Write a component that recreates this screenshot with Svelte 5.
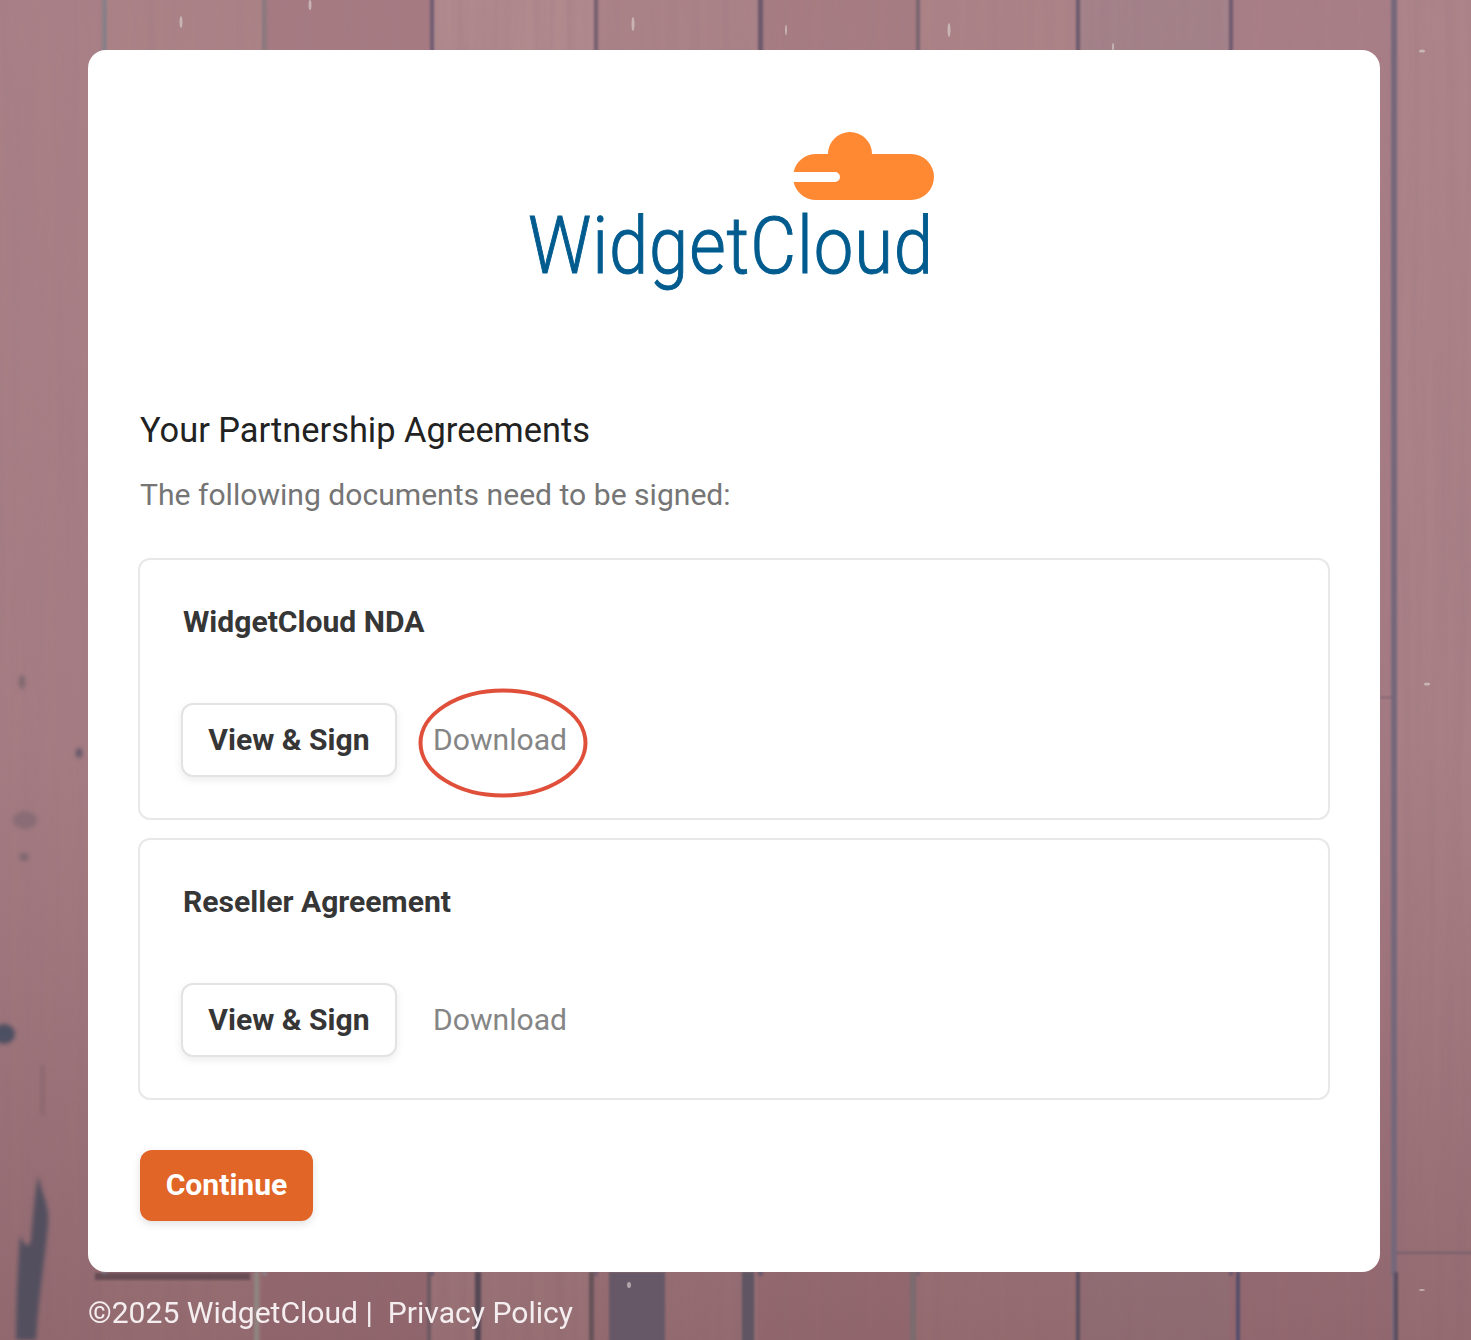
<script lang="ts">
	// plank joints of the deck behind the card, x in page pixels
	const joints = [
		{ x: 102, w: 5, c: '#8a7f88' },
		{ x: 262, w: 5, c: '#8d7a80' },
		{ x: 430, w: 4, c: '#6f5c72' },
		{ x: 594, w: 4, c: '#77606f' },
		{ x: 758, w: 5, c: '#6d5a6c' },
		{ x: 916, w: 4, c: '#7a6470' },
		{ x: 1076, w: 4, c: '#6d5a6c' },
		{ x: 1229, w: 4, c: '#6f5a70' },
		{ x: 1391, w: 6, c: '#76687a' }
	];
	const planks = [
		{ x: 0, w: 102, c: '#a98086' },
		{ x: 102, w: 160, c: '#ab8386' },
		{ x: 262, w: 168, c: '#a67a81' },
		{ x: 430, w: 164, c: '#b08a8d' },
		{ x: 594, w: 164, c: '#aa8388' },
		{ x: 758, w: 158, c: '#a77c82' },
		{ x: 916, w: 160, c: '#ac8386' },
		{ x: 1076, w: 153, c: '#a38289' },
		{ x: 1229, w: 162, c: '#a97e86' },
		{ x: 1391, w: 80, c: '#ac8489' }
	];
	// joints of the lower boards, only visible under the card
	const lowerJoints = [
		{ x: 254, w: 5, c: '#8f8480' },
		{ x: 427, w: 4, c: '#6e5a62' },
		{ x: 475, w: 6, c: '#574a54' },
		{ x: 589, w: 5, c: '#67525a' },
		{ x: 609, w: 56, c: '#665866' },
		{ x: 742, w: 12, c: '#5f5464' },
		{ x: 910, w: 6, c: '#7c6c70' },
		{ x: 1076, w: 4, c: '#5c5060' },
		{ x: 1236, w: 4, c: '#56506a' },
		{ x: 1394, w: 4, c: '#5c5060' }
	];
	const flecks = [
		[181, 22, 1.5, 6], [310, 5, 1.5, 5], [633, 24, 1.5, 7], [786, 30, 1, 5], [949, 30, 1.5, 7],
		[1113, 47, 1, 4], [1422, 51, 3, 1.5], [1427, 684, 3, 1.5], [1422, 1290, 3, 1], [629, 1285, 2, 3]
	];
	const docs = [
		{ title: 'WidgetCloud NDA', marked: true },
		{ title: 'Reseller Agreement', marked: false }
	];
</script>

<div class="page">
	<svg class="deck" width="1471" height="1340" viewBox="0 0 1471 1340" aria-hidden="true">
		<defs>
			<filter id="grain" x="0" y="0" width="100%" height="100%">
				<feTurbulence type="fractalNoise" baseFrequency="0.09 0.003" numOctaves="4" seed="7" />
				<feColorMatrix values="0 0 0 0 0.36  0 0 0 0 0.2  0 0 0 0 0.24  0 0 0 1.4 -0.45" />
			</filter>
			<filter id="soft" x="-20%" y="-20%" width="140%" height="140%">
				<feGaussianBlur stdDeviation="2" />
			</filter>
			<filter id="softer" x="-20%" y="-20%" width="140%" height="140%">
				<feGaussianBlur stdDeviation="0.800" />
			</filter>
			<linearGradient id="shade" x1="0" y1="0" x2="0" y2="1">
				<stop offset="0" stop-color="#6e4a50" stop-opacity="0" />
				<stop offset="0.55" stop-color="#6a4048" stop-opacity="0.06" />
				<stop offset="1" stop-color="#5c3238" stop-opacity="0.3" />
			</linearGradient>
		</defs>
		{#each planks as p}
			<rect x={p.x} y="0" width={p.w} height="1340" fill={p.c} />
		{/each}
		<rect width="1471" height="1340" filter="url(#grain)" opacity="0.6" />
		<rect width="1471" height="1340" fill="url(#shade)" />
		<g filter="url(#softer)">
			{#each joints as j}
				<rect x={j.x} y="-4" width={j.w} height="1280" fill={j.c} />
			{/each}
			<rect x="1392" y="1272" width="4" height="72" fill="#76687a" />
			{#each lowerJoints as j}
				<rect x={j.x} y="1272" width={j.w} height="72" fill={j.c} />
			{/each}
			<rect x="95" y="1273" width="155" height="7" fill="#55404a" opacity="0.7" />
			<rect x="1396" y="1252" width="80" height="1.500" fill="#6d5a6c" />
			<rect x="1380" y="697" width="13" height="1" fill="#6d5a6c" />
		</g>
		<!-- knots and dark streaks, left plank -->
		<g filter="url(#soft)">
			<ellipse cx="4" cy="1034" rx="11" ry="10" fill="#4d4f62" />
			<ellipse cx="79" cy="753" rx="3" ry="5" fill="#5d5366" />
			<ellipse cx="22" cy="682" rx="3" ry="7" fill="#7d666e" />
			<ellipse cx="25" cy="820" rx="12" ry="9" fill="#8a6c76" />
			<ellipse cx="24" cy="857" rx="5" ry="4" fill="#7f6670" />
			<rect x="41" y="1065" width="3" height="50" fill="#85636c" />
			<path d="M38 1175 C42 1195 50 1205 48 1225 C45 1260 38 1300 36 1340 L16 1340 C16 1300 18 1265 20 1235 C24 1245 28 1250 31 1240 C33 1215 35 1195 38 1175Z" fill="#53505f" />
		</g>
		{#each flecks as f}
			<ellipse cx={f[0]} cy={f[1]} rx={f[2]} ry={f[3]} fill="#d9cfcc" opacity="0.65" />
		{/each}
	</svg>

	<main class="card">
		<div class="logo">
			<svg class="mark" width="450" height="190" viewBox="0 0 450 190" role="img" aria-label="WidgetCloud">
				<path
					class="cloud"
					d="M286 44H298a22 22 0 0 1 44 0H381a23 23 0 0 1 0 46H286A23 23 0 0 1 263.600 72H305a5 5 0 0 0 0-10H263.600A23 23 0 0 1 286 44Z"
				/>
				<text class="wordmark" x="-2" y="163" textLength="406" lengthAdjust="spacingAndGlyphs">WidgetCloud</text>
			</svg>
		</div>

		<h1>Your Partnership Agreements</h1>
		<p class="lead">The following documents need to be signed:</p>

		<div class="docs">
			{#each docs as doc}
				<section class="doc">
					<h2>{doc.title}</h2>
					<div class="actions">
						<button class="sign">View &amp; Sign</button>
						<a class="download" href="#top">
							Download
							{#if doc.marked}
								<svg class="ring" width="172" height="112" viewBox="0 0 172 112" aria-hidden="true">
									<ellipse cx="86" cy="56" rx="82.500" ry="52.500" />
								</svg>
							{/if}
						</a>
					</div>
				</section>
			{/each}
		</div>

		<button class="continue">Continue</button>
	</main>

	<footer>©2025 WidgetCloud |&nbsp; <a href="#top">Privacy Policy</a></footer>
</div>

<style>
	:global(body) {
		margin: 0;
		font-family: Roboto, 'Liberation Sans', sans-serif;
	}

	.page {
		position: relative;
		box-sizing: border-box;
		height: 1340px;
		padding: 50px 91px 0 88px;
		overflow: hidden;
	}

	.deck {
		position: absolute;
		top: 0;
		left: 0;
	}

	.card {
		position: relative;
		box-sizing: border-box;
		height: 1222px;
		padding: 0 50px 0 50px;
		background: #fff;
		border-radius: 18px;
	}

	.logo {
		display: flex;
		padding: 60px 0 0 392px;
		height: 276px;
		box-sizing: border-box;
	}

	.mark {
		overflow: visible;
	}

	.cloud {
		fill: #ff8833;
	}

	.wordmark {
		font-family: Roboto, sans-serif;
		font-weight: 300;
		font-size: 79px;
		letter-spacing: 1px;
		fill: #005b8e;
		stroke: #005b8e;
		stroke-width: 1;
	}

	h1 {
		margin: 84px 0 0 2px;
		font-size: 34.400px;
		line-height: 40px;
		font-weight: 400;
		color: #222;
	}

	.lead {
		margin: 25px 0 0 2px;
		font-size: 30.100px;
		line-height: 40px;
		color: #757575;
	}

	.docs {
		display: flex;
		flex-direction: column;
		gap: 18px;
		margin-top: 43px;
	}

	.doc {
		box-sizing: border-box;
		height: 262px;
		padding: 44px 43px 0;
		border: 2px solid #e8e8e8;
		border-radius: 12px;
	}

	h2 {
		margin: 0;
		font-size: 30.100px;
		line-height: 36px;
		font-weight: 700;
		color: #363636;
	}

	.actions {
		display: flex;
		align-items: center;
		gap: 36px;
		margin-top: 63px;
	}

	.sign {
		box-sizing: border-box;
		width: 216px;
		height: 74px;
		margin-left: -2px;
		padding: 0 0 2px;
		background: #fff;
		border: 2px solid #e3e3e3;
		border-radius: 12px;
		box-shadow: 0 3px 8px rgba(0, 0, 0, 0.08);
		font: 700 30.100px Roboto, sans-serif;
		color: #363636;
	}

	.download {
		position: relative;
		top: -1px;
		font-size: 30.100px;
		color: #858585;
		text-decoration: none;
	}

	.ring {
		position: absolute;
		left: -16px;
		top: -35px;
		fill: none;
		stroke: #e04f3a;
		stroke-width: 4;
	}

	.continue {
		display: block;
		box-sizing: border-box;
		width: 173px;
		height: 71px;
		margin: 50px 0 0 2px;
		padding: 0 0 2px;
		background: #e06526;
		border: none;
		border-radius: 12px;
		box-shadow: 0 3px 8px rgba(0, 0, 0, 0.12);
		font: 700 30.100px Roboto, sans-serif;
		color: #fff;
	}

	footer {
		position: relative;
		margin-top: 22px;
		font-size: 30.100px;
		line-height: 38px;
		color: #f4eef0;
	}

	footer a {
		color: inherit;
		text-decoration: none;
	}
</style>
